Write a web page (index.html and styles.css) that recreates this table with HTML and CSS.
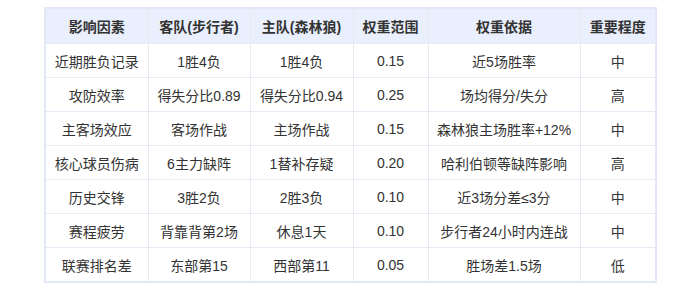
FILE: index.html
```html
<!DOCTYPE html>
<html>
  <head>
    <meta charset="utf-8">
    <title>权重分析</title>
    <link rel="stylesheet" href="styles.css">
  </head>
  <body>
    <div class="wrap">
      <table class="weights">
        <colgroup>
          <col class="c-factor">
          <col class="c-away">
          <col class="c-home">
          <col class="c-range">
          <col class="c-basis">
          <col class="c-level">
        </colgroup>
        <thead>
          <tr>
            <th>影响因素</th>
            <th>客队(步行者)</th>
            <th>主队(森林狼)</th>
            <th>权重范围</th>
            <th>权重依据</th>
            <th>重要程度</th>
          </tr>
        </thead>
        <tbody>
          <tr><td>近期胜负记录</td><td>1胜4负</td><td>1胜4负</td><td>0.15</td><td>近5场胜率</td><td>中</td></tr>
          <tr><td>攻防效率</td><td>得失分比0.89</td><td>得失分比0.94</td><td>0.25</td><td>场均得分/失分</td><td>高</td></tr>
          <tr><td>主客场效应</td><td>客场作战</td><td>主场作战</td><td>0.15</td><td>森林狼主场胜率+12%</td><td>中</td></tr>
          <tr><td>核心球员伤病</td><td>6主力缺阵</td><td>1替补存疑</td><td>0.20</td><td>哈利伯顿等缺阵影响</td><td>高</td></tr>
          <tr><td>历史交锋</td><td>3胜2负</td><td>2胜3负</td><td>0.10</td><td>近3场分差≤3分</td><td>中</td></tr>
          <tr><td>赛程疲劳</td><td>背靠背第2场</td><td>休息1天</td><td>0.10</td><td>步行者24小时内连战</td><td>中</td></tr>
          <tr><td>联赛排名差</td><td>东部第15</td><td>西部第11</td><td>0.05</td><td>胜场差1.5场</td><td>低</td></tr>
        </tbody>
      </table>
    </div>
  </body>
</html>
```

FILE: styles.css
```css
body {
  margin: 0;
  background: #fff;
  font-family: "Liberation Sans", "Noto Sans CJK SC", sans-serif;
  color: #333;
}

.wrap {
  padding: 7px 0 0 44px;
}

.weights {
  width: 611px;
  border-collapse: collapse;
  table-layout: fixed;
  border: 2px solid #e3e8f6;
  font-size: 14px;
}

.weights .c-factor { width: 103px; }
.weights .c-away { width: 102px; }
.weights .c-home { width: 103px; }
.weights .c-range { width: 75px; }
.weights .c-basis { width: 152px; }
.weights .c-level { width: 76px; }

.weights th,
.weights td {
  border: 1px solid #e6eaf5;
  text-align: center;
  padding: 0 4px;
  white-space: nowrap;
}

.weights th {
  height: 34px;
  background: #e9effc;
  font-weight: bold;
  color: #333;
}

.weights td {
  height: 33px;
}
```
